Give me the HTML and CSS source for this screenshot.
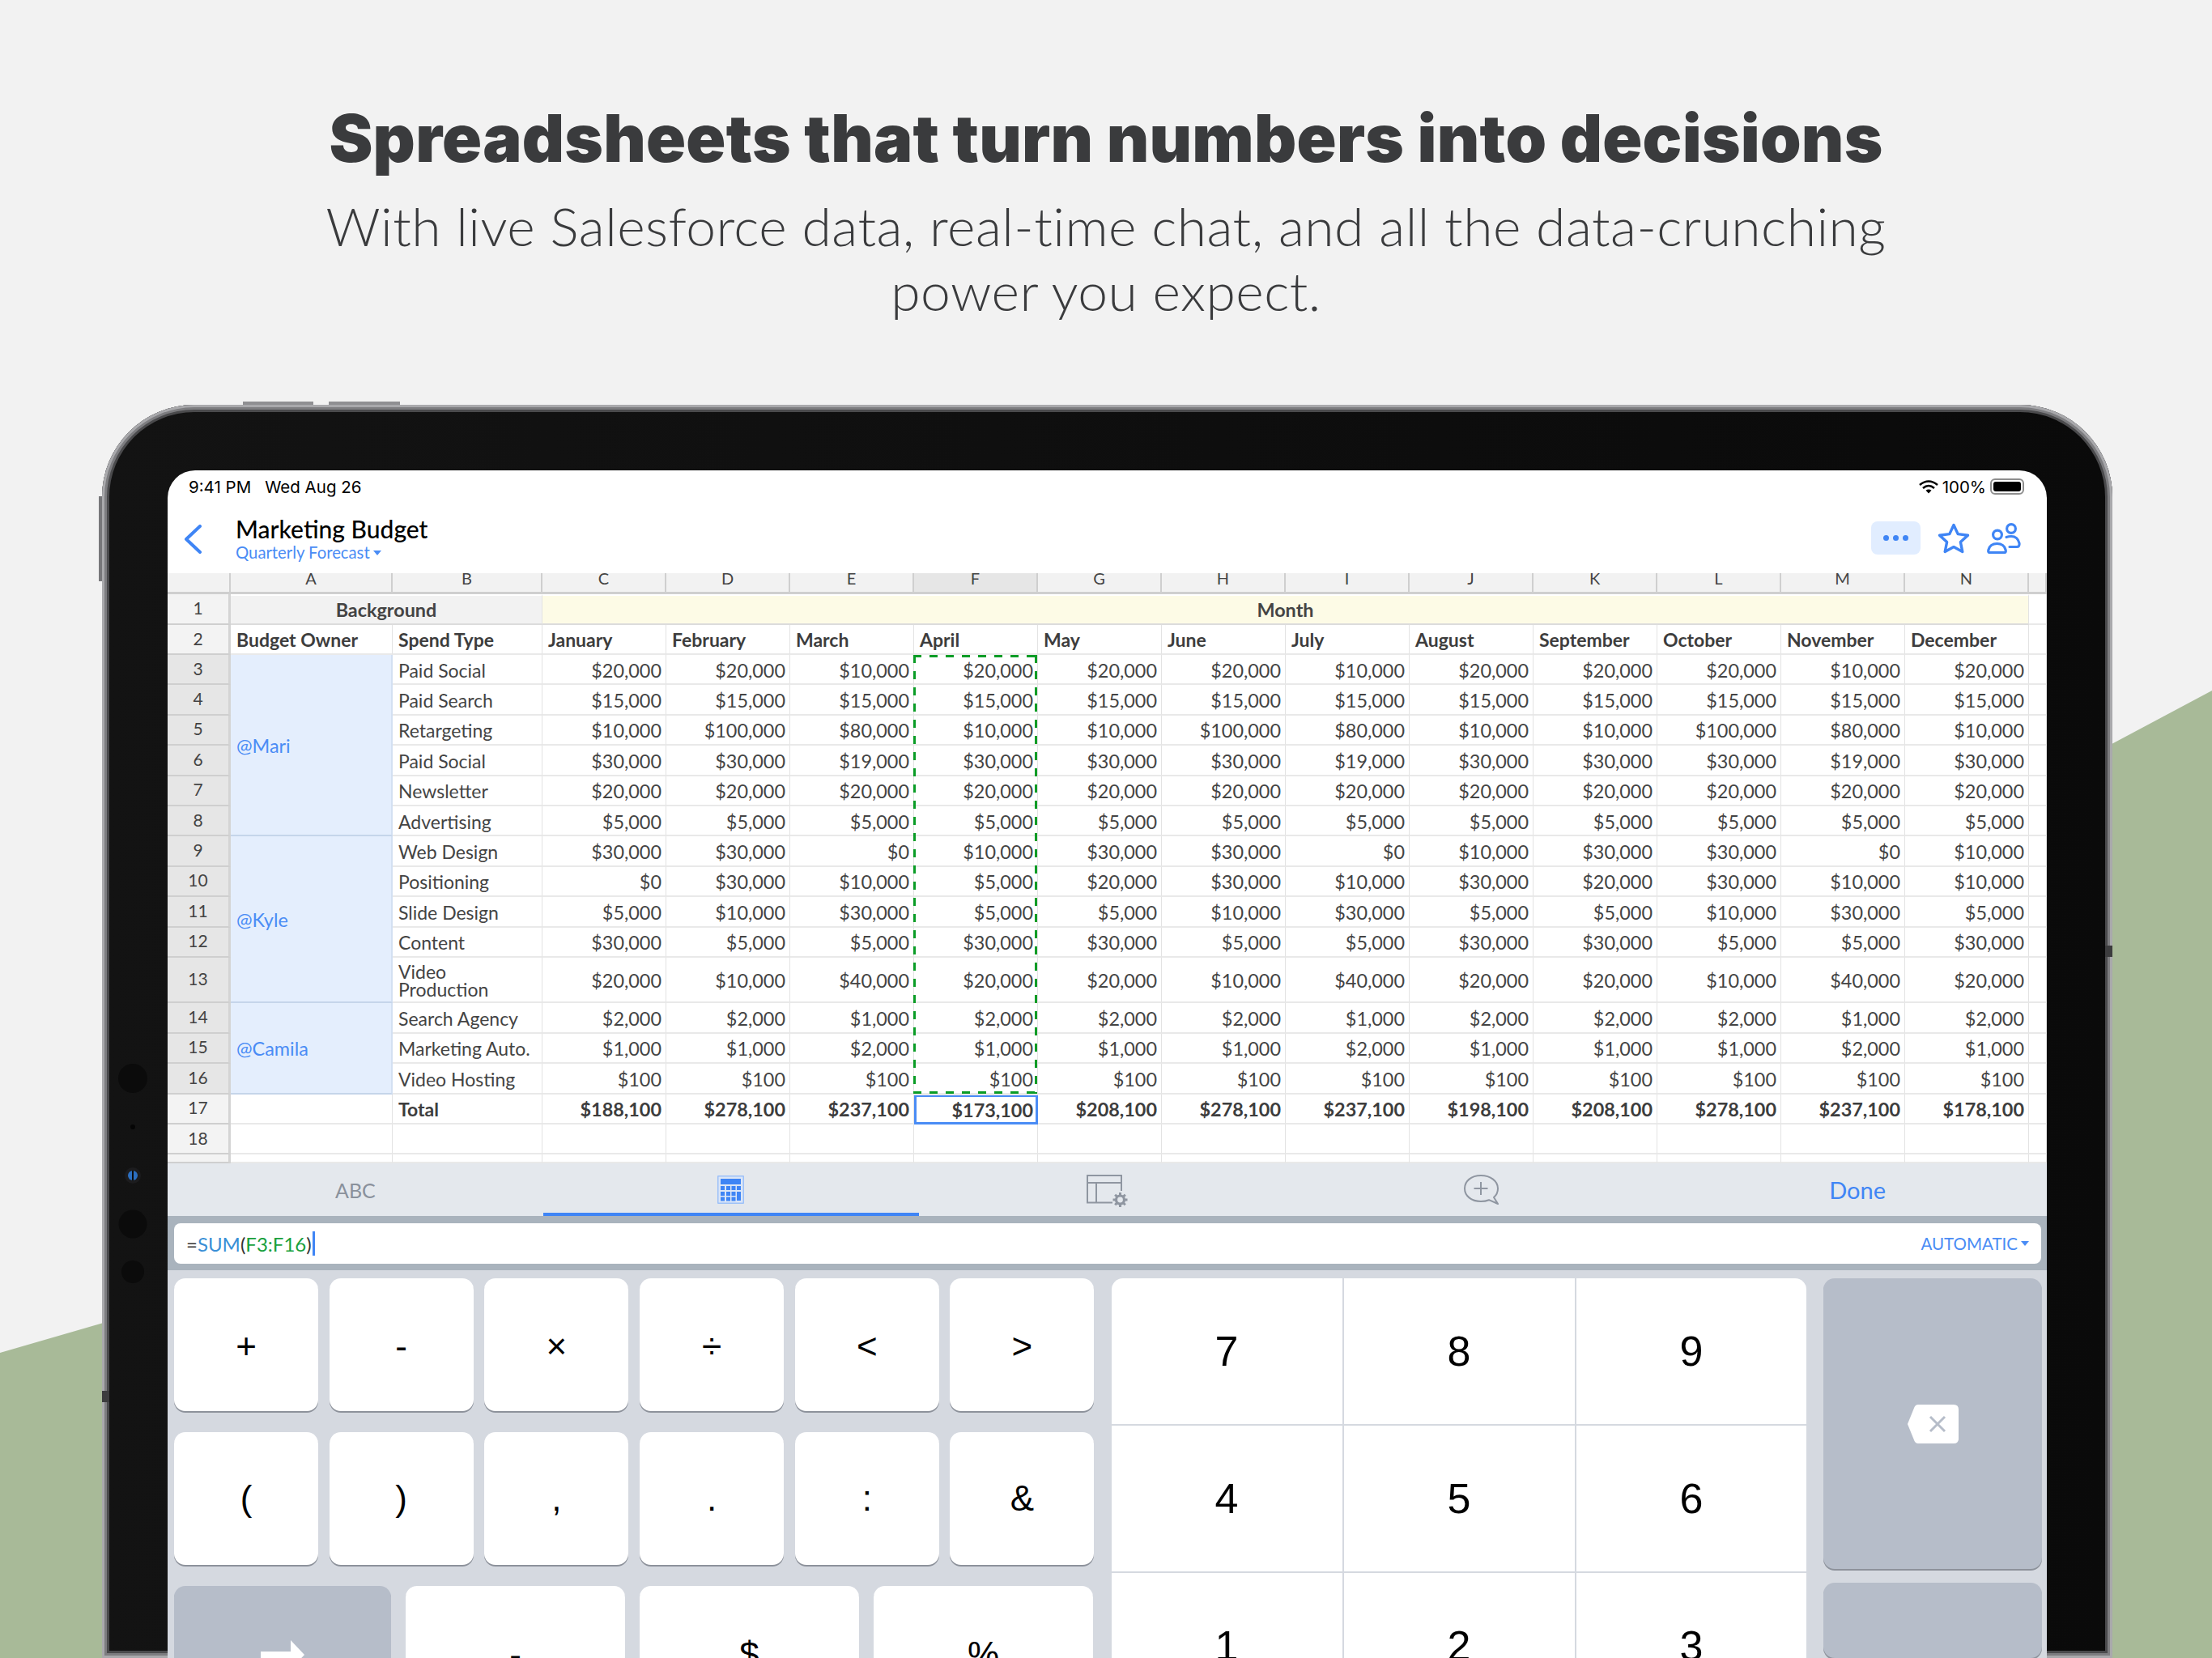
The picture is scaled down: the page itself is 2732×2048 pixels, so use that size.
FILE: index.html
```html
<!DOCTYPE html>
<html lang="en">

<head>
    <meta charset="UTF-8">
    <title>Spreadsheets that turn numbers into decisions</title>
    <link rel="stylesheet" href="styles.css">
</head>

<body>
    <svg class="backdrop" viewBox="0 0 2732 2048"><polygon points="0,1671 200,1613 2550,950 2732,853 2732,2048 0,2048" /></svg>

    <div class="intro">
        <h1>Spreadsheets that turn numbers into decisions</h1>
        <p>With live Salesforce data, real-time chat, and all the data-crunching power you expect.</p>
    </div>

    <div class="device">
        <span class="btn btn-top1"></span>
        <span class="btn btn-top2"></span>
        <span class="btn btn-left"></span>
        <span class="seam seam-right"></span>
        <span class="seam seam-left"></span>
        <span class="sensor s1"></span>
        <span class="sensor s2"></span>
        <span class="sensor cam"></span>
        <span class="sensor s3"></span>
        <span class="sensor s4"></span>

        <div class="screen">
            <div class="status">
                <span>9:41 PM</span>
                <span class="date">Wed Aug 26</span>
                <span class="status-right">
                    <svg width="24" height="17" viewBox="0 0 24 17" fill="none" stroke="#000" stroke-width="2.6"><path d="M1 6 Q12 -3 23 6" /><path d="M5 10 Q12 4 19 10" /><path d="M12 16.5 L8.5 12.8 Q12 10.4 15.5 12.8 Z" fill="#000" stroke="none" /></svg>
                    <span>100%</span>
                    <span class="battery"><i></i></span>
                </span>
            </div>
            <div class="nav">
                <svg class="back" width="22" height="36" viewBox="0 0 22 36" fill="none" stroke="#3f85f5" stroke-width="4" stroke-linecap="round" stroke-linejoin="round"><path d="M20 2 L3 18 L20 34" /></svg>
                <div class="doc">
                    <div class="doc-title">Marketing Budget</div>
                    <div class="doc-sub">Quarterly Forecast<i class="caret"></i></div>
                </div>
                <div class="nav-icons">
                    <div class="more"><i></i><i></i><i></i></div>
                    <svg width="40" height="38" viewBox="0 0 40 38" fill="none" stroke="#3f85f5" stroke-width="3.4" stroke-linejoin="round"><path d="M20 2.5 L25.2 13.6 L37.5 15.2 L28.4 23.6 L30.8 35.5 L20 29.6 L9.2 35.5 L11.6 23.6 L2.5 15.2 L14.8 13.6 Z" /></svg>
                    <svg width="42" height="38" viewBox="0 0 42 38" fill="none" stroke="#3f85f5" stroke-width="3.2" stroke-linecap="round" stroke-linejoin="round"><circle cx="13" cy="14.500" r="5.400" /><circle cx="30" cy="7" r="5.400" /><path d="M3.500 36.500 Q1 36.500 2 33 Q4 25.500 12.500 25.500 Q21 25.500 23 33 Q24 36.500 21.500 36.500 Z" /><path d="M24 17.500 Q27 16.500 30 16.500 Q38 16.500 40 25 Q40.500 29.500 37 29.500 H28" /></svg>
                </div>
            </div>

            <div class="sheet">
                <div class="col corner"></div><div class="col">A</div><div class="col">B</div><div class="col">C</div><div class="col">D</div><div class="col">E</div><div class="col on">F</div><div class="col">G</div><div class="col">H</div><div class="col">I</div><div class="col">J</div><div class="col">K</div><div class="col">L</div><div class="col">M</div><div class="col">N</div><div class="col end"></div>

                <div class="row">1</div><div class="band bg">Background</div><div class="band month">Month</div><div class="t"></div>
                <div class="row">2</div><div class="t b h">Budget Owner</div><div class="t b h">Spend Type</div><div class="t b h">January</div><div class="t b h">February</div><div class="t b h">March</div><div class="t b h">April</div><div class="t b h">May</div><div class="t b h">June</div><div class="t b h">July</div><div class="t b h">August</div><div class="t b h">September</div><div class="t b h">October</div><div class="t b h">November</div><div class="t b h">December</div><div class="t"></div>

                <div class="row on">3</div><div class="owner span6">@Mari</div><div class="t">Paid Social</div><div>$20,000</div><div>$20,000</div><div>$10,000</div><div>$20,000</div><div>$20,000</div><div>$20,000</div><div>$10,000</div><div>$20,000</div><div>$20,000</div><div>$20,000</div><div>$10,000</div><div>$20,000</div><div class="t"></div>
                <div class="row on">4</div><div class="t">Paid Search</div><div>$15,000</div><div>$15,000</div><div>$15,000</div><div>$15,000</div><div>$15,000</div><div>$15,000</div><div>$15,000</div><div>$15,000</div><div>$15,000</div><div>$15,000</div><div>$15,000</div><div>$15,000</div><div class="t"></div>
                <div class="row on">5</div><div class="t">Retargeting</div><div>$10,000</div><div>$100,000</div><div>$80,000</div><div>$10,000</div><div>$10,000</div><div>$100,000</div><div>$80,000</div><div>$10,000</div><div>$10,000</div><div>$100,000</div><div>$80,000</div><div>$10,000</div><div class="t"></div>
                <div class="row on">6</div><div class="t">Paid Social</div><div>$30,000</div><div>$30,000</div><div>$19,000</div><div>$30,000</div><div>$30,000</div><div>$30,000</div><div>$19,000</div><div>$30,000</div><div>$30,000</div><div>$30,000</div><div>$19,000</div><div>$30,000</div><div class="t"></div>
                <div class="row on">7</div><div class="t">Newsletter</div><div>$20,000</div><div>$20,000</div><div>$20,000</div><div>$20,000</div><div>$20,000</div><div>$20,000</div><div>$20,000</div><div>$20,000</div><div>$20,000</div><div>$20,000</div><div>$20,000</div><div>$20,000</div><div class="t"></div>
                <div class="row on">8</div><div class="t">Advertising</div><div>$5,000</div><div>$5,000</div><div>$5,000</div><div>$5,000</div><div>$5,000</div><div>$5,000</div><div>$5,000</div><div>$5,000</div><div>$5,000</div><div>$5,000</div><div>$5,000</div><div>$5,000</div><div class="t"></div>

                <div class="row on">9</div><div class="owner span5">@Kyle</div><div class="t">Web Design</div><div>$30,000</div><div>$30,000</div><div>$0</div><div>$10,000</div><div>$30,000</div><div>$30,000</div><div>$0</div><div>$10,000</div><div>$30,000</div><div>$30,000</div><div>$0</div><div>$10,000</div><div class="t"></div>
                <div class="row on">10</div><div class="t">Positioning</div><div>$0</div><div>$30,000</div><div>$10,000</div><div>$5,000</div><div>$20,000</div><div>$30,000</div><div>$10,000</div><div>$30,000</div><div>$20,000</div><div>$30,000</div><div>$10,000</div><div>$10,000</div><div class="t"></div>
                <div class="row on">11</div><div class="t">Slide Design</div><div>$5,000</div><div>$10,000</div><div>$30,000</div><div>$5,000</div><div>$5,000</div><div>$10,000</div><div>$30,000</div><div>$5,000</div><div>$5,000</div><div>$10,000</div><div>$30,000</div><div>$5,000</div><div class="t"></div>
                <div class="row on">12</div><div class="t">Content</div><div>$30,000</div><div>$5,000</div><div>$5,000</div><div>$30,000</div><div>$30,000</div><div>$5,000</div><div>$5,000</div><div>$30,000</div><div>$30,000</div><div>$5,000</div><div>$5,000</div><div>$30,000</div><div class="t"></div>
                <div class="row on">13</div><div class="t wrap">Video<br>Production</div><div>$20,000</div><div>$10,000</div><div>$40,000</div><div>$20,000</div><div>$20,000</div><div>$10,000</div><div>$40,000</div><div>$20,000</div><div>$20,000</div><div>$10,000</div><div>$40,000</div><div>$20,000</div><div class="t"></div>

                <div class="row on">14</div><div class="owner span3">@Camila</div><div class="t">Search Agency</div><div>$2,000</div><div>$2,000</div><div>$1,000</div><div>$2,000</div><div>$2,000</div><div>$2,000</div><div>$1,000</div><div>$2,000</div><div>$2,000</div><div>$2,000</div><div>$1,000</div><div>$2,000</div><div class="t"></div>
                <div class="row on">15</div><div class="t">Marketing Auto.</div><div>$1,000</div><div>$1,000</div><div>$2,000</div><div>$1,000</div><div>$1,000</div><div>$1,000</div><div>$2,000</div><div>$1,000</div><div>$1,000</div><div>$1,000</div><div>$2,000</div><div>$1,000</div><div class="t"></div>
                <div class="row on">16</div><div class="t">Video Hosting</div><div>$100</div><div>$100</div><div>$100</div><div>$100</div><div>$100</div><div>$100</div><div>$100</div><div>$100</div><div>$100</div><div>$100</div><div>$100</div><div>$100</div><div class="t"></div>

                <div class="row">17</div><div class="t"></div><div class="t b">Total</div><div class="b">$188,100</div><div class="b">$278,100</div><div class="b">$237,100</div><div class="b active">$173,100</div><div class="b">$208,100</div><div class="b">$278,100</div><div class="b">$237,100</div><div class="b">$198,100</div><div class="b">$208,100</div><div class="b">$278,100</div><div class="b">$237,100</div><div class="b">$178,100</div><div class="t"></div>
                <div class="row">18</div><div></div><div></div><div></div><div></div><div></div><div></div><div></div><div></div><div></div><div></div><div></div><div></div><div></div><div></div><div></div>
                <div class="row"></div><div></div><div></div><div></div><div></div><div></div><div></div><div></div><div></div><div></div><div></div><div></div><div></div><div></div><div></div><div></div>

                <div class="marching"></div>
            </div>

            <div class="tabs">
                <div class="tab abc">ABC</div>
                <div class="tab current">
                    <svg width="33" height="35" viewBox="0 0 33 35"><rect width="33" height="35" rx="1" fill="#9dc1f8" /><rect x="1.5" y="1.5" width="30" height="32" fill="#dbe6f7" /><rect x="4" y="4" width="25" height="7" fill="#3f85f5" /><g fill="#3f85f5"><rect x="4" y="13" width="5" height="5" /><rect x="11" y="13" width="5" height="5" /><rect x="17.5" y="13" width="5" height="5" /><rect x="24" y="13" width="5" height="5" /><rect x="4" y="20" width="5" height="5" /><rect x="11" y="20" width="5" height="5" /><rect x="17.5" y="20" width="5" height="5" /><rect x="24" y="20" width="5" height="11" /><rect x="4" y="26.5" width="5" height="5" /><rect x="11" y="26.5" width="5" height="5" /><rect x="17.5" y="26.5" width="5" height="5" /></g></svg>
                </div>
                <div class="tab">
                    <svg class="tab-cog" width="52" height="41" viewBox="0 0 52 41" fill="none" stroke="#8f96a1" stroke-width="2"><path d="M43 20 V1 H1 V34.500 H32" /><path d="M1 10 H43 M12 10 V34" /><circle cx="41.500" cy="31" r="5" stroke-width="3.200" /><path d="M41.500 22 V26 M41.500 36 V40 M32.500 31 H36.500 M46.500 31 H50.500 M35.200 24.700 L38 27.500 M45 34.500 L47.800 37.300 M47.800 24.700 L45 27.500 M38 34.500 L35.200 37.300" stroke-width="3" /></svg>
                </div>
                <div class="tab">
                    <svg width="44" height="37" viewBox="0 0 44 37" fill="none" stroke="#8f96a1" stroke-width="2"><path d="M21 1 C9 1 1 8 1 17 C1 26 9 33 21 33 C25 33 28 32.400 31 31.200 L42 36 L37 28 C40.500 25 42 21 42 17 C42 8 33 1 21 1 Z" stroke-linejoin="round" /><path d="M21 9 V25 M12.500 17 H29.500" /></svg>
                </div>
                <div class="tab done">Done</div>
            </div>

            <div class="formula">
                <div class="input">
                    <span class="entry">=<span class="fn">SUM</span>(<span class="ref">F3:F16</span>)<i class="cursor"></i></span>
                    <span class="auto">AUTOMATIC<i class="caret"></i></span>
                </div>
            </div>

            <div class="keyboard">
                <div class="symbols">
                    <div class="key-row">
                        <div class="key">+</div><div class="key">-</div><div class="key">×</div><div class="key">÷</div><div class="key">&lt;</div><div class="key">&gt;</div>
                    </div>
                    <div class="key-row">
                        <div class="key">(</div><div class="key">)</div><div class="key">,</div><div class="key">.</div><div class="key">:</div><div class="key">&amp;</div>
                    </div>
                    <div class="key-row last">
                        <div class="key dark">
                            <svg width="54" height="36" viewBox="0 0 54 36" fill="#fff"><path d="M0 14 H37 V0 L54 18 L37 36 V22 H0 Z" /></svg>
                        </div>
                        <div class="key">-</div><div class="key">$</div><div class="key">%</div>
                    </div>
                </div>
                <div class="pad">
                    <div>7</div><div>8</div><div>9</div><div>4</div><div>5</div><div>6</div><div>1</div><div>2</div><div>3</div>
                </div>
                <div class="side">
                    <div class="key dark backspace">
                        <svg width="63" height="48" viewBox="0 0 63 48"><path d="M13 0 H57 Q63 0 63 6 V42 Q63 48 57 48 H13 Q10 48 8.500 45 L0 24 L8.500 3 Q10 0 13 0 Z" fill="#fff" /><path d="M28 15 L46 33 M46 15 L28 33" stroke="#b6bdc9" stroke-width="3" fill="none" /></svg>
                    </div>
                    <div class="key dark"></div>
                </div>
            </div>
        </div>
    </div>
</body>

</html>
```

FILE: styles.css
```css
*{
    margin: 0;
    padding: 0;
    box-sizing: border-box;
}
html,body{
    width: 2732px;
    height: 2048px;
    overflow: hidden;
}
body{
    position: relative;
    background-color: #f2f2f2;
    font-family: "Lato", "Liberation Sans", sans-serif;
    color: #444;
}
i{
    display: block;
}
.backdrop{
    position: absolute;
    top: 0;
    left: 0;
    width: 2732px;
    height: 2048px;
    fill: #a8ba98;
}

/* heading */
.intro{
    position: relative;
    height: 500px;
    padding-top: 121px;
    text-align: center;
    color: #3a3b3d;
}
h1{
    font-family: "Inter", "Liberation Sans", sans-serif;
    font-size: 81px;
    line-height: 100px;
    font-weight: 900;
    letter-spacing: 0.25px;
}
.intro p{
    width: 2000px;
    margin: 18px auto 0;
    font-size: 66px;
    line-height: 80px;
    font-weight: 300;
    letter-spacing: 0.45px;
}

/* ipad frame */
.device{
    position: relative;
    width: 2483px;
    height: 1548px;
    margin-left: 126px;
    padding: 81px 81px 0;
    background: linear-gradient(to right,#131313,#0a0a0a);
    border-radius: 114px 114px 0 0;
    box-shadow: inset 0 0 0 3px #a9a9ac, inset 0 0 0 6px #7d7d80, inset 0 0 0 9px #4a4a4c;
}
.btn{
    position: absolute;
    background-color: #8f8f92;
}
.btn-top1{
    top: -4px;
    left: 174px;
    width: 87px;
    height: 4px;
}
.btn-top2{
    top: -4px;
    left: 280px;
    width: 88px;
    height: 4px;
}
.btn-left{
    top: 113px;
    left: -4px;
    width: 4px;
    height: 105px;
    background-color: #77777a;
}
.seam{
    position: absolute;
    width: 9px;
    height: 14px;
    background-color: #3c3c3e;
}
.seam-right{
    top: 668px;
    right: 0;
}
.seam-left{
    top: 1218px;
    left: 0;
}
.sensor{
    position: absolute;
    left: 38px;
    border-radius: 50%;
    transform: translate(-50%,-50%);
    background-color: #0b0b0b;
}
.s1{
    top: 832px;
    width: 36px;
    height: 36px;
}
.s2{
    top: 892px;
    width: 6px;
    height: 6px;
    background-color: #050505;
}
.cam{
    top: 952px;
    width: 12px;
    height: 12px;
    background: linear-gradient(to right,#2c6fc0 0 42%,#0c0c0c 42% 58%,#2c6fc0 58%);
    box-shadow: 0 0 0 4px #1c1c1e;
}
.s3{
    top: 1012px;
    width: 35px;
    height: 35px;
}
.s4{
    top: 1071px;
    width: 28px;
    height: 28px;
}
.screen{
    width: 2321px;
    height: 1467px;
    overflow: hidden;
    border-radius: 34px 34px 0 0;
    background-color: white;
}

/* status + nav */
.status{
    display: flex;
    align-items: center;
    height: 40px;
    padding: 0 28px 0 26px;
    font-family: "Inter", "Liberation Sans", sans-serif;
    font-size: 20.5px;
    color: black;
}
.date{
    margin-left: 17px;
}
.status-right{
    display: flex;
    align-items: center;
    gap: 5px;
    margin-left: auto;
}
.battery{
    width: 42px;
    height: 20px;
    padding: 2px;
    border: 2px solid #8e8e8e;
    border-radius: 6px;
}
.battery i{
    height: 100%;
    border-radius: 3px;
    background-color: black;
}
.nav{
    display: flex;
    align-items: center;
    height: 87px;
    padding: 0 32px 0 20px;
}
.back{
    margin: 3px 0 0;
}
.doc{
    margin-left: 42px;
}
.doc-title{
    font-size: 30px;
    line-height: 36px;
    font-weight: 500;
    color: black;
}
.doc-sub{
    display: flex;
    align-items: center;
    gap: 4px;
    font-size: 20.3px;
    line-height: 23px;
    color: #4a8cf5;
}
.caret{
    width: 0;
    height: 0;
    border-left: 5px solid transparent;
    border-right: 5px solid transparent;
    border-top: 6px solid #4a8cf5;
}
.nav-icons{
    display: flex;
    align-items: center;
    gap: 21px;
    margin-left: auto;
}
.more{
    display: flex;
    align-items: center;
    justify-content: center;
    gap: 5px;
    width: 61px;
    height: 41px;
    border-radius: 8px;
    background-color: #e1edff;
}
.more i{
    width: 7px;
    height: 7px;
    border-radius: 50%;
    background-color: #3f85f5;
}

/* spreadsheet */
.sheet{
    position: relative;
    display: grid;
    grid-template-columns: 78px 200px 185px repeat(12,153px) 1fr;
    grid-template-rows: 26px 38px 37px repeat(10,37.4px) 56.5px repeat(3,37.4px) 37.4px 37.4px 1fr;
    height: 729px;
    overflow: hidden;
    font-size: 23.4px;
    background-color: white;
}
.sheet>div{
    display: flex;
    align-items: center;
    justify-content: flex-end;
    padding: 2px 5px 0 7px;
    border-right: 1px solid #e3e3e3;
    border-bottom: 2px solid #e9e9e9;
    white-space: nowrap;
}
.sheet>.t{
    justify-content: flex-start;
    font-size: 23px;
}
.sheet>.b{
    font-weight: 700;
    color: #3d3d3d;
}
.sheet>.h{
    padding-top: 0;
}
.sheet>.wrap{
    white-space: normal;
    line-height: 22px;
}
.sheet>.col{
    align-items: flex-start;
    justify-content: center;
    padding: 0;
    font-size: 20px;
    line-height: 12px;
    background-color: #f2f2f2;
    border-right: 2px solid #cfcfcf;
    border-bottom: 3px solid #cfcfcf;
}
.sheet>.col.on{
    background-color: #e6e6e6;
}
.sheet>.row{
    justify-content: center;
    padding: 0 0 3px;
    font-size: 21px;
    background-color: #f3f3f3;
    border-right: 3px solid #d4d4d4;
    border-bottom: 2px solid #cfcfcf;
}
.sheet>.row.on{
    background-color: #e6e6e6;
}
.sheet>.band{
    justify-content: center;
    grid-column: span 2;
    padding: 0;
    font-weight: 700;
    border-top: 2px solid white;
    border-bottom: 2px solid #dcdcdc;
}
.sheet>.bg{
    background-color: #f2f2f2;
}
.sheet>.month{
    grid-column: span 12;
    background-color: #fdfbe6;
}
.sheet>.owner{
    justify-content: flex-start;
    color: #4a8cf5;
    background-color: #e4eefd;
    border-right: 2px solid #d3e0f2;
    border-bottom: 2px solid #c5d5ea;
}
.span6{
    grid-row: span 6;
}
.span5{
    grid-row: span 5;
}
.span3{
    grid-row: span 3;
}
.sheet>.active{
    border: 3px solid #4a8cf5;
    padding-right: 3px;
}
.marching{
    position: absolute;
    top: 101px;
    left: 921px;
    width: 154px;
    height: 544px;
    padding: 0;
    background:
        repeating-linear-gradient(to bottom,#0a9c26 0 10px,transparent 10px 20px) left top/3px 100% no-repeat,
        repeating-linear-gradient(to bottom,#0a9c26 0 10px,transparent 10px 20px) right top/3px 100% no-repeat,
        repeating-linear-gradient(to right,#0a9c26 0 10px,transparent 10px 20px) left top/100% 3px no-repeat,
        repeating-linear-gradient(to right,#0a9c26 0 10px,transparent 10px 20px) left bottom/100% 3px no-repeat;
}

/* input tabs */
.tabs{
    display: flex;
    height: 65px;
    background-color: #e4e8ed;
}
.tab{
    flex: 1;
    display: flex;
    align-items: center;
    justify-content: center;
    height: 65px;
}
.abc{
    font-size: 25px;
    color: #8a919c;
}
.current{
    padding-top: 4px;
    border-bottom: 4px solid #3f85f5;
}
.tab-cog{
    margin: 4px 0 0 3px;
}
.done{
    padding-right: 2px;
    font-size: 29px;
    color: #3f85f5;
}

/* formula bar */
.formula{
    height: 67px;
    padding: 9px 7px 8px 8px;
    background-color: #a9b3bd;
}
.input{
    display: flex;
    align-items: center;
    justify-content: space-between;
    height: 50px;
    padding: 0 15px;
    border-radius: 8px;
    background-color: white;
}
.entry{
    display: flex;
    align-items: center;
    font-size: 24px;
    color: #333;
}
.fn{
    color: #3a8fd6;
}
.ref{
    color: #18a03c;
}
.cursor{
    width: 3px;
    height: 30px;
    margin-left: 1px;
    background-color: #3f85f5;
}
.auto{
    display: flex;
    align-items: center;
    gap: 4px;
    font-size: 20.5px;
    color: #4a8cf5;
}

/* keyboard */
.keyboard{
    display: flex;
    height: 479px;
    padding: 10px 6px 0 8px;
    background-color: #d5d9e0;
    font-family: "Liberation Sans", sans-serif;
    color: black;
}
.symbols{
    display: flex;
    flex-direction: column;
    gap: 26px;
    width: 1137px;
}
.key-row{
    flex: none;
    display: grid;
    grid-template-columns: repeat(6,178px);
    justify-content: space-between;
    height: 164px;
}
.key-row:first-child .key{
    padding-top: 3px;
}
.key-row.last{
    grid-template-columns: 268px repeat(3,271px);
    column-gap: 18px;
    justify-content: start;
    height: 170px;
}
.key{
    display: flex;
    align-items: center;
    justify-content: center;
    border-radius: 14px;
    font-size: 44px;
    background-color: white;
    box-shadow: 0 2px 0 #8d929b;
}
.key.dark{
    background-color: #b6bdc9;
}
.pad{
    display: grid;
    grid-template-columns: 285px 285px 285px;
    grid-auto-rows: 180px;
    gap: 2px;
    margin: 0 21px;
    width: 859px;
    overflow: hidden;
    border-radius: 14px 14px 0 0;
}
.pad div{
    display: flex;
    align-items: center;
    justify-content: center;
    font-size: 52px;
    background-color: white;
}
.side{
    display: flex;
    flex-direction: column;
    gap: 17px;
    width: 270px;
}
.backspace{
    flex: none;
    height: 359px;
}
.side .key:last-child{
    height: 200px;
}
```
